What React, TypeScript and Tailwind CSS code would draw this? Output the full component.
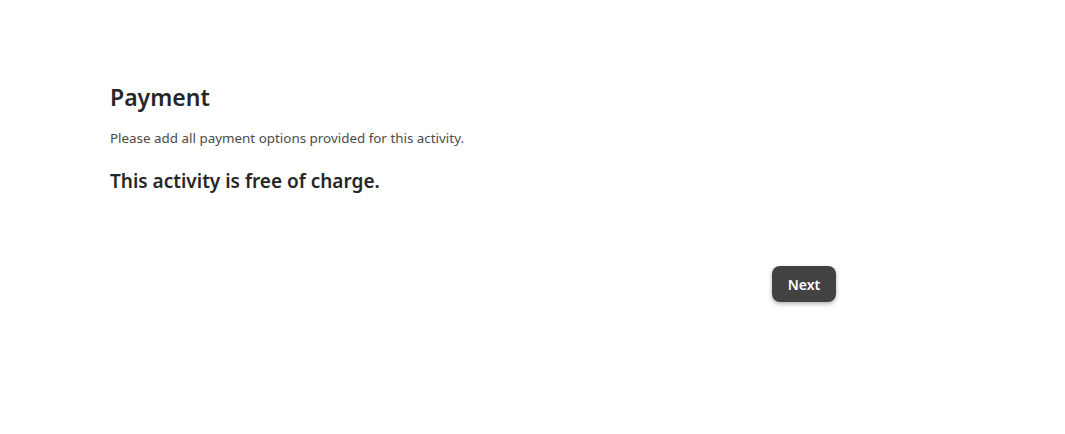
import React from 'react';

const App: React.FC = () => {
  return (
    <div className="w-[1065px] h-[434px] bg-white" style={{ fontFamily: '"Noto Sans", Lato, sans-serif' }}>
      <div className="pl-[110px] pt-[82px] w-[836px]">
        <h1 className="text-[23px] leading-[31px] font-semibold text-[#262626]">Payment</h1>
        <p className="mt-[16px] text-[13.4px] leading-[18px] text-[#4a4a4a]">
          Please add all payment options provided for this activity.
        </p>
        <h2 className="mt-[21px] text-[19px] leading-[26px] font-semibold text-[#262626]">
          This activity is free of charge.
        </h2>
        <div className="mt-[72px] flex justify-end">
          <button className="w-[64px] h-[36px] rounded-[8px] bg-[#424242] text-white text-[14px] font-semibold shadow-[0_2px_4px_rgba(0,0,0,0.3)]">
            Next
          </button>
        </div>
      </div>
    </div>
  );
};

export default App;
